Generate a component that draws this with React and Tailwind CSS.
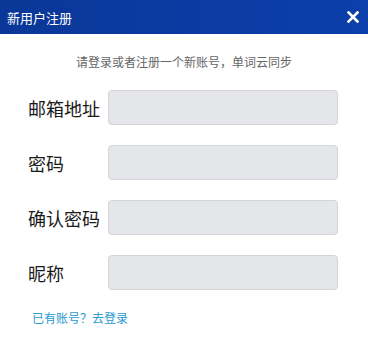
export default function App() {
  const fields = ["邮箱地址", "密码", "确认密码", "昵称"];
  return (
    <div className="w-[368px] h-[360px] bg-white overflow-hidden font-['Noto_Sans_CJK_SC',sans-serif]">
      <div className="h-[34px] flex items-center justify-between pl-[7px] pr-[9px] bg-gradient-to-r from-[#0a3797] via-[#0b3ba2] to-[#0c3fab]">
        <span className="text-white text-[13px] leading-none">新用户注册</span>
        <svg width="12" height="12" viewBox="0 0 12 12">
          <path d="M1.5 1.5 L10.5 10.5 M10.5 1.5 L1.5 10.5" stroke="white" strokeWidth="2.6" strokeLinecap="square" />
        </svg>
      </div>

      <p className="mt-[20px] text-center text-[12px] leading-4 text-[#666666]">
        请登录或者注册一个新账号，单词云同步
      </p>

      <div className="mt-[20px] flex flex-col gap-[20px]">
        {fields.map((f) => (
          <div key={f} className="flex items-center">
            <label className="w-[80px] pl-[28px] box-content text-[18px] leading-none text-[#1a1a1a] whitespace-nowrap">
              {f}
            </label>
            <input
              type={f.includes("密码") ? "password" : "text"}
              className="w-[230px] h-[35px] rounded-[4px] border border-[#d3d4d8] bg-[#e5e6ea] outline-none"
            />
          </div>
        ))}
      </div>

      <a className="block mt-[20px] ml-[32px] text-[12px] leading-4 text-[#2a9ad0] cursor-pointer">
        已有账号？去登录
      </a>
    </div>
  );
}
